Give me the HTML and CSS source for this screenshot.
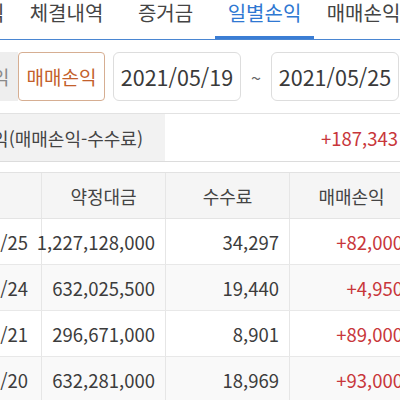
FILE: index.html
```html
<!DOCTYPE html>
<html lang="ko">
<head>
<meta charset="utf-8">
<link rel="stylesheet" href="styles.css">
</head>
<body>
<div class="screen">
  <nav class="tabs">
    <div class="tab">잔고손익</div>
    <div class="tab">체결내역</div>
    <div class="tab">증거금</div>
    <div class="tab active">일별손익</div>
    <div class="tab">매매손익</div>
  </nav>

  <div class="filter">
    <div class="segment">
      <div class="seg">일별손익</div>
      <div class="seg selected">매매손익</div>
    </div>
    <div class="date">2021/05/19</div>
    <div class="tilde">~</div>
    <div class="date">2021/05/25</div>
  </div>

  <div class="summary">
    <div class="sum-label">순손익(매매손익-수수료)</div>
    <div class="sum-value">+187,343</div>
  </div>

  <div class="grid">
    <div class="row head">
      <div class="cell">일자</div>
      <div class="cell">약정대금</div>
      <div class="cell">수수료</div>
      <div class="cell">매매손익</div>
    </div>
    <div class="row">
      <div class="cell date-cell">2021/05/25</div>
      <div class="cell num">1,227,128,000</div>
      <div class="cell num">34,297</div>
      <div class="cell num plus">+82,000</div>
    </div>
    <div class="row alt">
      <div class="cell date-cell">2021/05/24</div>
      <div class="cell num">632,025,500</div>
      <div class="cell num">19,440</div>
      <div class="cell num plus">+4,950</div>
    </div>
    <div class="row">
      <div class="cell date-cell">2021/05/21</div>
      <div class="cell num">296,671,000</div>
      <div class="cell num">8,901</div>
      <div class="cell num plus">+89,000</div>
    </div>
    <div class="row alt">
      <div class="cell date-cell">2021/05/20</div>
      <div class="cell num">632,281,000</div>
      <div class="cell num">18,969</div>
      <div class="cell num plus">+93,000</div>
    </div>
  </div>
</div>
</body>
</html>
```

FILE: styles.css
```css
html, body {
  margin: 0;
  padding: 0;
  background: #ffffff;
}
body {
  width: 400px;
  height: 400px;
  overflow: hidden;
  font-family: "Noto Sans CJK KR", "Noto Sans", sans-serif;
  color: #3c3c3c;
}
.screen {
  width: 496px;
  margin-left: -83px;
}

/* tabs */
.tabs {
  display: flex;
  height: 39px;
  padding-left: 1px;
  border-bottom: 1px solid #4a86d2;
}
.tab {
  flex: 0 0 99px;
  display: flex;
  align-items: center;
  justify-content: center;
  font-size: 20px;
  color: #444;
  height: 39px;
  padding-bottom: 14px;
  box-sizing: border-box;
  white-space: nowrap;
}
.tab.active {
  color: #2f78d2;
  border-bottom: 3px solid #3b7dd4;
  padding-bottom: 11px;
}

/* filter */
.filter {
  display: flex;
  align-items: center;
  padding: 12px 0 12px 14px;
}
.segment {
  display: flex;
  height: 49px;
  margin-right: 8px;
}
.seg {
  width: 87px;
  display: flex;
  align-items: center;
  justify-content: center;
  font-size: 19px;
  color: #8a8a8a;
  background: #eeeeee;
  box-sizing: border-box;
}
.seg.selected {
  background: #ffffff;
  color: #c3602b;
  border: 1px solid #d6ae92;
  border-radius: 4px;
}
.date {
  width: 128px;
  height: 49px;
  box-sizing: border-box;
  border: 1px solid #dddddd;
  border-radius: 6px;
  display: flex;
  align-items: center;
  justify-content: center;
  font-size: 21.5px;
  color: #3a3a3a;
}
.tilde {
  width: 30px;
  text-align: center;
  font-size: 18px;
  color: #666;
}

/* summary */
.summary {
  display: flex;
  height: 49px;
  box-sizing: border-box;
  border-top: 1px solid #e2e2e2;
  border-bottom: 1px solid #dcdcdc;
  margin-bottom: 10px;
}
.sum-label {
  width: 248px;
  background: #f2f2f2;
  display: flex;
  align-items: center;
  justify-content: flex-end;
  padding-right: 22px;
  box-sizing: border-box;
  font-size: 18px;
  color: #444;
  white-space: nowrap;
}
.sum-value {
  flex: 1;
  display: flex;
  align-items: center;
  justify-content: flex-end;
  padding-right: 15px;
  font-size: 18.5px;
  color: #c8363a;
}

/* grid */
.grid {
  border-top: 1px solid #e2e2e2;
}
.row {
  display: grid;
  grid-template-columns: repeat(4, 124px);
  height: 46px;
  box-sizing: border-box;
  border-bottom: 1px solid #e8e8e8;
}
.row.head {
  background: #f5f5f5;
  border-bottom-color: #e4e4e4;
}
.row.alt {
  background: #f9f9f9;
}
.cell {
  display: flex;
  align-items: center;
  justify-content: center;
  border-left: 1px solid #e6e6e6;
  font-size: 18.5px;
  color: #3c3c3c;
  white-space: nowrap;
}
.cell:first-child {
  border-left: none;
}
.head .cell {
  font-size: 18px;
  color: #444;
}
.cell.num {
  justify-content: flex-end;
  padding-right: 10px;
}
.cell.date-cell {
  justify-content: flex-end;
  padding-right: 13px;
}
.cell.plus {
  color: #c8363a;
}
```
